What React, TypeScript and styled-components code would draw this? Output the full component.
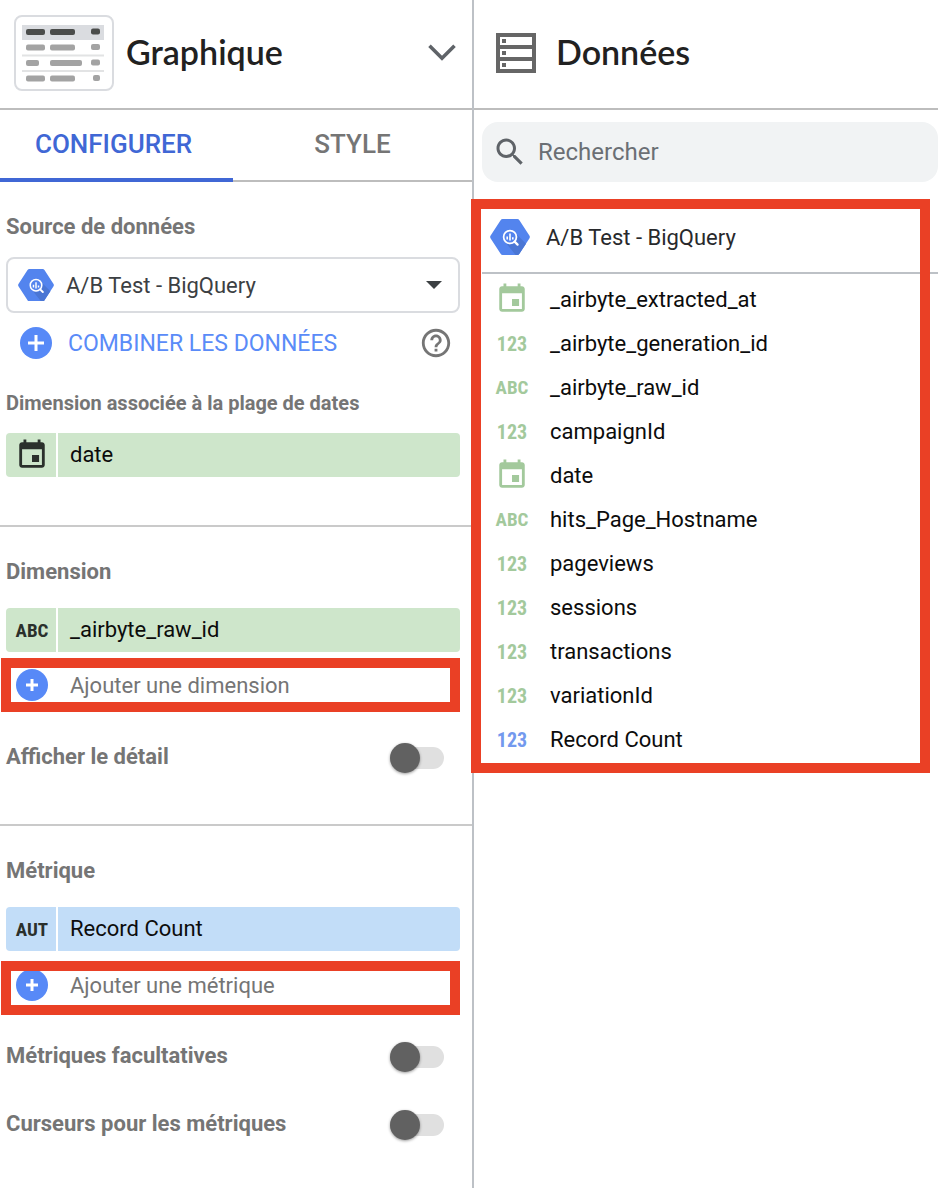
import React, { useState } from "react";
import styled, { createGlobalStyle } from "styled-components";

const GlobalStyle = createGlobalStyle`
  *, *::before, *::after { box-sizing: border-box; }
  body { margin: 0; background: #fff; font-family: Roboto, "Liberation Sans", sans-serif; }
  button, input, select { font: inherit; color: inherit; }
  button { margin: 0; padding: 0; border: 0; background: none; text-align: left; cursor: pointer; }
  h1, h2, h3, ul { margin: 0; padding: 0; font-weight: inherit; }
`;

const RED = "#ea4025";

const Layout = styled.div`
  display: grid;
  grid-template-columns: minmax(0, 474fr) minmax(0, 464fr);
  min-height: 100vh;
`;

const ConfigPanel = styled.section`
  border-right: 2px solid #bdc1c6;
`;

const DataPanel = styled.section``;

const PanelHeader = styled.header<{ $gap: number; $left: number }>`
  display: flex;
  align-items: center;
  gap: ${(p) => p.$gap}px;
  height: 110px;
  padding: 0 16px 2px ${(p) => p.$left}px;
  border-bottom: 2px solid #bdbdbd;
`;

const PanelTitle = styled.h1`
  flex: 1;
  padding-bottom: 2px;
  font-family: Lato, Roboto, sans-serif;
  font-size: 34px;
  line-height: 40px;
  font-weight: 600;
  color: #212121;
`;

const IconButton = styled.button`
  display: flex;
`;

const Tabs = styled.div`
  display: flex;
  height: 72px;
  margin-left: -6px;
  border-bottom: 2px solid #bdbdbd;
`;

const Tab = styled.button<{ $active: boolean }>`
  flex: 1;
  height: 72px;
  padding-bottom: ${(p) => (p.$active ? 0 : 4)}px;
  text-align: center;
  font-size: 26px;
  font-weight: 500;
  color: ${(p) => (p.$active ? "#4067d5" : "#757575")};
  border-bottom: ${(p) => (p.$active ? "4px solid #4067d5" : "0")};
`;

const TabsClip = styled.div`
  overflow: hidden;
`;

const Section = styled.section<{ $bottom?: number }>`
  padding: 30px 12px ${(p) => p.$bottom ?? 0}px 6px;
  & + & { border-top: 2px solid #cacaca; }
`;

const SectionTitle = styled.h2<{ $gap: number }>`
  margin-bottom: ${(p) => p.$gap}px;
  font-size: 22px;
  line-height: 30px;
  font-weight: 700;
  color: #757575;
`;

const SubTitle = styled.h3`
  margin: 29px 0 15px;
  font-size: 20px;
  line-height: 30px;
  font-weight: 700;
  color: #757575;
`;

const SourceBox = styled.label`
  display: flex;
  align-items: center;
  gap: 12px;
  height: 56px;
  padding: 0 16px 0 10px;
  border: 2px solid #dadce0;
  border-radius: 8px;
`;

const SourceSelect = styled.select`
  flex: 1;
  min-width: 0;
  padding: 0;
  border: 0;
  appearance: none;
  background: none;
  font-size: 22px;
  color: #3c4043;
`;

const BlendRow = styled.div`
  display: flex;
  align-items: center;
  justify-content: space-between;
  height: 32px;
  margin-top: 14px;
  padding: 0 7px 0 14px;
`;

const BlendButton = styled.button`
  display: flex;
  align-items: center;
  gap: 16px;
  font-size: 23px;
  color: #5a8bf8;
`;

const Chip = styled.button<{ $color: string }>`
  display: grid;
  grid-template-columns: 50px 1fr;
  gap: 2px;
  width: 100%;
  height: 44px;
  border-radius: 4px;
  overflow: hidden;
  font-size: 22px;
  color: #0c0c0c;
  & > span { display: flex; align-items: center; background: ${(p) => p.$color}; }
`;

const ChipType = styled.span`
  justify-content: center;
  padding-left: 2px;
  color: #2b302c;
`;

const ChipName = styled.span`
  padding: 0 0 2px 12px;
`;

const TypeText = styled.span<{ $digits: boolean }>`
  font-family: "Liberation Sans Narrow", "Roboto Condensed", Roboto, sans-serif;
  font-size: ${(p) => (p.$digits ? 20 : 19)}px;
  line-height: 24px;
  padding-top: 2px;
  font-weight: 700;
`;

const AddSlot = styled.div<{ $gap: number }>`
  position: relative;
  height: 54px;
  margin: ${(p) => p.$gap}px 0 0 -5px;
`;

const AddButton = styled.button<{ $height: number }>`
  display: flex;
  align-items: center;
  gap: 22px;
  width: 100%;
  height: ${(p) => p.$height}px;
  padding-left: 15px;
  font-size: 22px;
  color: #757575;
`;

const Frame = styled.div`
  position: absolute;
  inset: 0;
  border: 10px solid ${RED};
  pointer-events: none;
`;

const ListFrame = styled(Frame)`
  inset: 0 8px 0 -3px;
`;

const ToggleRow = styled.label<{ $gap: number }>`
  display: flex;
  align-items: center;
  justify-content: space-between;
  height: 30px;
  margin-top: ${(p) => p.$gap}px;
  padding-right: 16px;
  font-size: 22px;
  line-height: 28px;
  font-weight: 700;
  color: #757575;
`;

const Switch = styled.input`
  appearance: none;
  flex: none;
  display: flex;
  align-items: center;
  width: 54px;
  height: 22px;
  margin: 2px 0 0;
  border-radius: 11px;
  background: #e0e0e0;
  &::before {
    content: "";
    width: 30px;
    height: 30px;
    border-radius: 50%;
    background: #616161;
    box-shadow: 0 1px 3px rgba(0, 0, 0, 0.4);
  }
  &:checked { justify-content: flex-end; }
`;

const SearchBox = styled.label`
  display: flex;
  align-items: center;
  gap: 10px;
  height: 60px;
  margin: 12px 0 0 8px;
  padding: 0 16px 0 10px;
  border-radius: 16px;
  background: #f1f3f4;
  color: #5f6368;
`;

const SearchInput = styled.input`
  flex: 1;
  min-width: 0;
  padding: 0;
  border: 0;
  outline: 0;
  background: none;
  font-size: 24px;
  &::placeholder { color: #6b6f74; opacity: 1; }
`;

const FieldArea = styled.div`
  position: relative;
  margin-top: 17px;
  padding: 10px 0 12px 8px;
`;

const SourceHeading = styled.h2`
  display: flex;
  align-items: center;
  gap: 16px;
  height: 65px;
  padding: 0 0 7px 8px;
  border-bottom: 2px solid #bdc1c6;
  font-size: 22px;
  color: #28292c;
`;

const FieldList = styled.ul`
  padding-top: 3px;
  list-style: none;
`;

const Field = styled.li`
  display: grid;
  grid-template-columns: 60px 1fr;
  gap: 8px;
  align-items: center;
  height: 44px;
  font-size: 22px;
  color: #0c0c0c;
`;

const FieldType = styled.span<{ $metric: boolean }>`
  display: flex;
  justify-content: center;
  color: ${(p) => (p.$metric ? "#7399ee" : "#a3c99c")};
`;

const CalendarIcon = () => (
  <svg width="34" height="34" viewBox="0 0 24 24" fill="currentColor" aria-hidden="true">
    <path d="M17 12h-5v5h5v-5zM16 1v2H8V1H6v2H5c-1.11 0-1.99.9-1.99 2L3 19c0 1.1.89 2 2 2h14c1.1 0 2-.9 2-2V5c0-1.1-.9-2-2-2h-1V1h-2zm3 18H5V8h14v11z" />
  </svg>
);

const BigQueryIcon = ({ width }: { width: number }) => (
  <svg width={width} height={width * 0.9} viewBox="0 0 40 36" aria-hidden="true">
    <path d="M10.6 1.2Q11.3 0 12.7 0H27.3Q28.7 0 29.4 1.2L39.5 16.8Q40.2 18 39.5 19.2L29.4 34.8Q28.7 36 27.3 36H12.7Q11.3 36 10.6 34.8L.5 19.2Q-.2 18 .5 16.8Z" fill="#5384ee" />
    <path d="M24.6 13.2L36 24.7L29.4 34.8Q28.7 36 27.3 36H25.6L15.6 23.4Z" fill="#4a76d4" />
    <circle cx="20" cy="18" r="7.6" fill="#5384ee" />
    <circle cx="20" cy="18" r="6.4" fill="none" stroke="#fff" strokeWidth="1.7" />
    <path d="M17.2 17.6v3M20 14.6v7M22.8 18.2v2.4" stroke="#fff" strokeWidth="1.6" />
    <path d="M24.6 22.6l3 3" stroke="#fff" strokeWidth="2.2" strokeLinecap="round" />
  </svg>
);

const PlusIcon = ({ arm }: { arm: number }) => (
  <svg width="32" height="32" viewBox="0 0 32 32" aria-hidden="true">
    <circle cx="16" cy="16" r="16" fill="#5789f7" />
    <path d={`M${16 - arm} 16h${arm * 2}M16 ${16 - arm}v${arm * 2}`} stroke="#fff" strokeWidth="3" />
  </svg>
);

const TableThumb = () => (
  <svg width="100" height="76" viewBox="0 0 100 76" aria-hidden="true">
    <rect x="1" y="1" width="98" height="74" rx="7" fill="#fff" stroke="#dadce0" strokeWidth="2" />
    <path d="M8 10h82v15H8z" fill="#dadce0" />
    <path d="M8 40.5h82M8 56h82" stroke="#e2e3e4" strokeWidth="2" />
    <g fill="#4b4d4b">
      <rect x="12" y="14" width="19" height="6" rx="2" />
      <rect x="36" y="14" width="25" height="6" rx="2" />
      <rect x="77" y="13.5" width="9" height="6" rx="2" />
    </g>
    <g fill="#a3a3a3">
      <rect x="12" y="29.5" width="19" height="6" rx="2" />
      <rect x="36" y="29.5" width="25" height="6" rx="2" />
      <rect x="77" y="29" width="9" height="6" rx="2" />
      <rect x="12" y="45" width="13" height="6" rx="2" />
      <rect x="36" y="45" width="32" height="6" rx="2" />
      <rect x="77" y="44.5" width="9" height="6" rx="2" />
      <rect x="12" y="60.5" width="19" height="6" rx="2" />
      <rect x="36" y="60.5" width="25" height="6" rx="2" />
      <rect x="79" y="60" width="7" height="6" rx="2" />
    </g>
  </svg>
);

const ChevronIcon = () => (
  <svg width="28" height="18" viewBox="0 0 28 18" aria-hidden="true">
    <path d="M1.5 1.8L14 14.3L26.5 1.8" fill="none" stroke="#5f6368" strokeWidth="3.6" />
  </svg>
);

const DataIcon = () => (
  <svg width="40" height="40" viewBox="0 0 40 40" aria-hidden="true">
    <path d="M0 0h40v40H0z" fill="#666" />
    <path d="M4 4h32v8H4zM4 16h32v8H4zM4 28h32v8H4z" fill="#fff" />
    <path d="M6 6h4v4H6zM6 18h4v4H6zM6 30h4v4H6z" fill="#666" />
  </svg>
);

const SearchIcon = () => (
  <svg width="36" height="36" viewBox="0 0 24 24" fill="currentColor" aria-hidden="true">
    <path d="M15.5 14h-.79l-.28-.27C15.41 12.59 16 11.11 16 9.5 16 5.91 13.09 3 9.5 3S3 5.91 3 9.5 5.91 16 9.5 16c1.61 0 3.09-.59 4.23-1.57l.27.28v.79l5 4.99L20.49 19l-4.99-5zm-6 0C7.01 14 5 11.99 5 9.5S7.01 5 9.5 5 14 7.01 14 9.5 11.99 14 9.5 14z" />
  </svg>
);

const HelpIcon = () => (
  <svg width="34" height="34" viewBox="0 0 24 24" fill="#757575" aria-hidden="true">
    <path d="M11 18h2v-2h-2v2zm1-16C6.48 2 2 6.48 2 12s4.48 10 10 10 10-4.48 10-10S17.52 2 12 2zm0 18c-4.41 0-8-3.59-8-8s3.59-8 8-8 8 3.59 8 8-3.59 8-8 8zm0-14c-2.21 0-4 1.79-4 4h2c0-1.1.9-2 2-2s2 .9 2 2c0 2-3 1.75-3 5h2c0-2.25 3-2.5 3-5 0-2.21-1.79-4-4-4z" />
  </svg>
);

const ArrowIcon = () => (
  <svg width="16" height="8" viewBox="0 0 16 8" aria-hidden="true">
    <path d="M0 0h16L8 8z" fill="#3c4043" />
  </svg>
);

type Kind = "DATE" | "123" | "ABC" | "AUT";

const TypeMark = ({ kind }: { kind: Kind }) =>
  kind === "DATE" ? <CalendarIcon /> : <TypeText $digits={kind === "123"}>{kind}</TypeText>;

const FieldChip = ({ kind, name, color }: { kind: Kind; name: string; color: string }) => (
  <Chip type="button" $color={color}>
    <ChipType><TypeMark kind={kind} /></ChipType>
    <ChipName>{name}</ChipName>
  </Chip>
);

const AddField = ({ label, gap, height }: { label: string; gap: number; height: number }) => (
  <AddSlot $gap={gap}>
    <AddButton type="button" $height={height}>
      <PlusIcon arm={6} />
      {label}
    </AddButton>
    <Frame />
  </AddSlot>
);

const Toggle = ({ label, gap }: { label: string; gap: number }) => (
  <ToggleRow $gap={gap}>
    {label}
    <Switch type="checkbox" role="switch" />
  </ToggleRow>
);

const GREEN = "#cee6cb";
const BLUE = "#c2ddf8";

const FIELDS: { kind: Kind; name: string; metric?: boolean }[] = [
  { kind: "DATE", name: "_airbyte_extracted_at" },
  { kind: "123", name: "_airbyte_generation_id" },
  { kind: "ABC", name: "_airbyte_raw_id" },
  { kind: "123", name: "campaignId" },
  { kind: "DATE", name: "date" },
  { kind: "ABC", name: "hits_Page_Hostname" },
  { kind: "123", name: "pageviews" },
  { kind: "123", name: "sessions" },
  { kind: "123", name: "transactions" },
  { kind: "123", name: "variationId" },
  { kind: "123", name: "Record Count", metric: true },
];

export default function App() {
  const [tab, setTab] = useState("CONFIGURER");
  return (
    <>
      <GlobalStyle />
      <Layout>
        <ConfigPanel>
          <PanelHeader $gap={12} $left={14}>
            <TableThumb />
            <PanelTitle>Graphique</PanelTitle>
            <IconButton type="button" aria-label="Graphique"><ChevronIcon /></IconButton>
          </PanelHeader>
          <TabsClip>
            <Tabs role="tablist">
              {["CONFIGURER", "STYLE"].map((name) => (
                <Tab key={name} type="button" role="tab" aria-selected={tab === name} $active={tab === name} onClick={() => setTab(name)}>
                  {name}
                </Tab>
              ))}
            </Tabs>
          </TabsClip>

          <Section $bottom={48}>
            <SectionTitle $gap={15} id="source">Source de données</SectionTitle>
            <SourceBox>
              <BigQueryIcon width={36} />
              <SourceSelect aria-labelledby="source">
                <option>A/B Test - BigQuery</option>
              </SourceSelect>
              <ArrowIcon />
            </SourceBox>
            <BlendRow>
              <BlendButton type="button">
                <PlusIcon arm={8} />
                COMBINER LES DONNÉES
              </BlendButton>
              <IconButton type="button" aria-label="Aide"><HelpIcon /></IconButton>
            </BlendRow>
            <SubTitle>Dimension associée à la plage de dates</SubTitle>
            <FieldChip kind="DATE" name="date" color={GREEN} />
          </Section>

          <Section $bottom={52}>
            <SectionTitle $gap={21}>Dimension</SectionTitle>
            <FieldChip kind="ABC" name="_airbyte_raw_id" color={GREEN} />
            <AddField label="Ajouter une dimension" gap={6} height={54} />
            <Toggle label="Afficher le détail" gap={30} />
          </Section>

          <Section>
            <SectionTitle $gap={21}>Métrique</SectionTitle>
            <FieldChip kind="AUT" name="Record Count" color={BLUE} />
            <AddField label="Ajouter une métrique" gap={10} height={48} />
            <Toggle label="Métriques facultatives" gap={26} />
            <Toggle label="Curseurs pour les métriques" gap={38} />
          </Section>
        </ConfigPanel>

        <DataPanel>
          <PanelHeader $gap={20} $left={22}>
            <DataIcon />
            <PanelTitle>Données</PanelTitle>
          </PanelHeader>
          <SearchBox>
            <SearchIcon />
            <SearchInput type="search" placeholder="Rechercher" aria-label="Rechercher" />
          </SearchBox>
          <FieldArea>
            <SourceHeading>
              <BigQueryIcon width={40} />
              A/B Test - BigQuery
            </SourceHeading>
            <FieldList>
              {FIELDS.map((f) => (
                <Field key={f.name}>
                  <FieldType $metric={!!f.metric}><TypeMark kind={f.kind} /></FieldType>
                  {f.name}
                </Field>
              ))}
            </FieldList>
            <ListFrame />
          </FieldArea>
        </DataPanel>
      </Layout>
    </>
  );
}
